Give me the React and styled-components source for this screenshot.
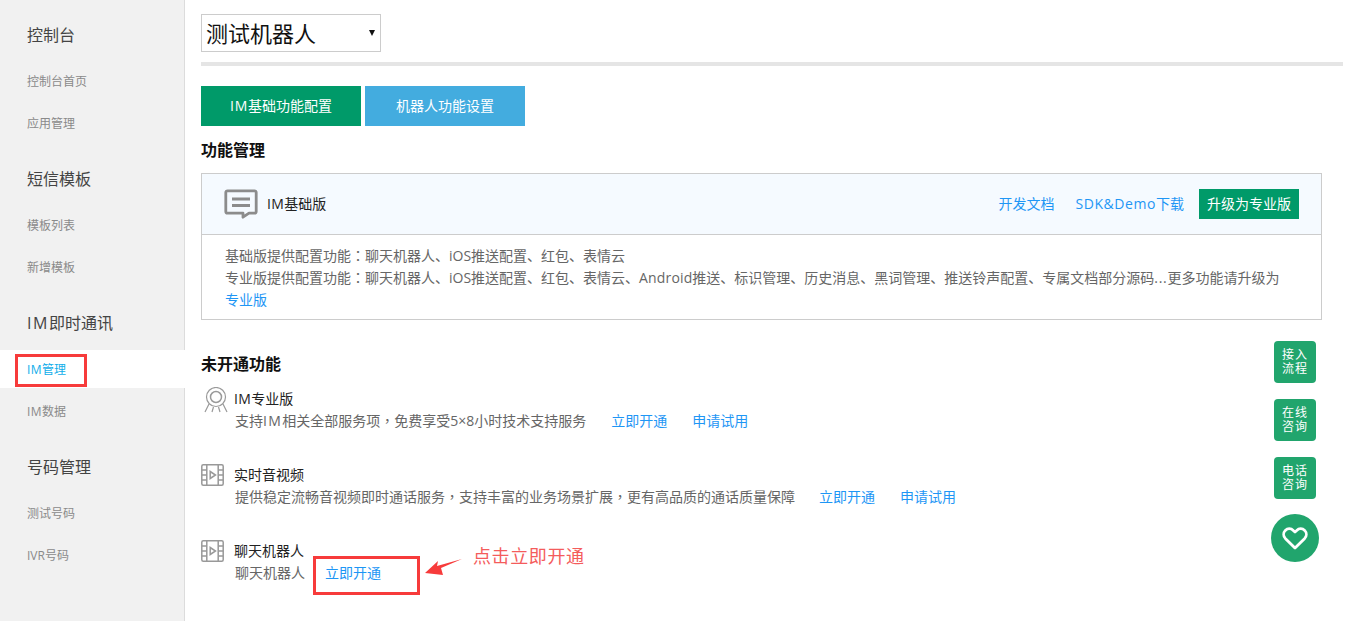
import React from "react";
import styled, { createGlobalStyle } from "styled-components";

const FONT = `"Open Sans", "Noto Sans CJK SC", "Liberation Sans", sans-serif`;

const Global = createGlobalStyle`
  html, body { margin: 0; padding: 0; background: #fff; }
  body { font-family: ${FONT}; color: #333; overflow: hidden; }
  * { box-sizing: border-box; }
`;

const Page = styled.div`
  display: flex;
  width: 1348px;
  height: 621px;
  position: relative;
  overflow: hidden;
`;

const Latin = styled.span`
  letter-spacing: ${(p) => p.$track || 0.1}em;
`;
const Punct = styled.span`
  font-family: "Noto Sans CJK TC", sans-serif;
  line-height: 0;
`;

const Sidebar = styled.nav`
  width: 185px;
  flex: none;
  padding-top: 12px;
  background: #f1f1f1;
  border-right: 1px solid #dcdcdc;
`;
const NavGroup = styled.div`
  padding-bottom: 10px;
`;
const NavHeading = styled.div`
  height: 46px;
  margin-bottom: 4px;
  padding-left: 27px;
  font-size: 16px;
  line-height: 46px;
  color: #444;
`;
const NavItem = styled.div`
  height: 38px;
  margin-bottom: 4px;
  margin-right: ${(p) => (p.$active ? "-1px" : "0")};
  padding: 1px 0 0 27px;
  font-size: 12px;
  line-height: 37px;
  color: ${(p) => (p.$active ? "#10aeea" : "#8a8a8a")};
  background: ${(p) => (p.$active ? "#fff" : "transparent")};
`;

const Main = styled.main`
  flex: 1;
  min-width: 0;
  padding: 14px 5px 0 16px;
`;
const SelectWrap = styled.div`
  position: relative;
  width: 180px;
  height: 38px;
  &::after {
    content: "";
    position: absolute;
    right: 6px;
    top: 16px;
    border-left: 3.5px solid transparent;
    border-right: 3.5px solid transparent;
    border-top: 6px solid #111;
  }
`;
const Select = styled.select`
  appearance: none;
  width: 100%;
  height: 100%;
  padding: 0 0 0 4px;
  border: 1px solid #ccc;
  border-radius: 0;
  background: #fff;
  font-family: ${FONT};
  font-size: 22px;
  color: #111;
`;
const Divider = styled.div`
  height: 4px;
  margin-top: 10px;
  background: #e5e5e5;
`;
const Tabs = styled.div`
  display: flex;
  gap: 4px;
  margin-top: 20px;
`;
const Tab = styled.div`
  width: 160px;
  height: 40px;
  font-size: 14px;
  line-height: 40px;
  text-align: center;
  color: #fff;
  background: ${(p) => (p.$active ? "#009a69" : "#43acdf")};
`;
const SectionTitle = styled.h2`
  height: 24px;
  margin: ${(p) => p.$top}px 0 0;
  font-size: 16px;
  font-weight: 700;
  line-height: 24px;
  color: #111;
`;
const Panel = styled.section`
  width: 1121px;
  margin-top: 11px;
  border: 1px solid #ccc;
`;
const PanelHeader = styled.header`
  display: flex;
  align-items: center;
  height: 61px;
  padding: 0 22px 0 22px;
  background: #f5faff;
  border-bottom: 1px solid #ccc;
`;
const PanelName = styled.span`
  margin: 0 0 2px 9px;
  font-size: 14px;
  color: #222;
`;
const PanelActions = styled.div`
  display: flex;
  align-items: center;
  margin-left: auto;
`;
const Link = styled.a`
  margin-left: ${(p) => p.$gap || 0}px;
  font-size: 14px;
  color: #1e96f5;
  white-space: nowrap;
`;
const HeaderLink = styled(Link)`
  margin-bottom: 2px;
`;
const UpgradeButton = styled.div`
  width: 100px;
  height: 30px;
  margin-left: 15px;
  font-size: 14px;
  line-height: 30px;
  text-align: center;
  color: #fff;
  background: #009a69;
`;
const PanelBody = styled.div`
  padding: 10px 23px 8px;
  font-size: 14px;
  line-height: 22px;
  color: #666;
`;
const FeatureList = styled.div`
  display: flex;
  flex-direction: column;
  gap: 32px;
  margin-top: 12px;
`;
const Feature = styled.div`
  display: flex;
  padding-left: ${(p) => p.$inset || 0}px;
`;
const FeatureIcon = styled.div`
  flex: none;
  width: ${(p) => p.$width}px;
  margin-top: ${(p) => p.$top || 0}px;
  line-height: 0;
`;
const FeatureTitle = styled.div`
  font-size: 14px;
  line-height: 22px;
  color: #222;
`;
const FeatureDesc = styled.div`
  display: flex;
  padding-left: 1px;
  font-size: 14px;
  line-height: 22px;
  color: #666;
`;

const RedBox = styled.div`
  position: absolute;
  left: ${(p) => p.$x}px;
  top: ${(p) => p.$y}px;
  width: ${(p) => p.$w}px;
  height: ${(p) => p.$h}px;
  border: 3px solid #f73b3b;
`;
const ArrowMark = styled.svg`
  position: absolute;
  left: 424px;
  top: 558px;
`;
const Callout = styled.div`
  position: absolute;
  left: 473px;
  top: 544px;
  font-size: 18px;
  line-height: 24px;
  letter-spacing: 0.6px;
  color: #f45c5c;
  white-space: nowrap;
`;
const FloatBar = styled.aside`
  position: absolute;
  right: 29px;
  top: 341px;
  display: flex;
  flex-direction: column;
  align-items: center;
  gap: 16px;
  width: 48px;
`;
const FloatButton = styled.div`
  width: 42px;
  height: 42px;
  padding-top: 7px;
  border-radius: 4px;
  background: #21a56d;
  color: #fff;
  font-family: "Liberation Sans", "Noto Sans CJK SC", sans-serif;
  font-size: 12px;
  line-height: 14px;
  letter-spacing: 1px;
  text-align: center;
`;
const FloatCircle = styled.div`
  display: flex;
  align-items: center;
  justify-content: center;
  width: 48px;
  height: 48px;
  margin-top: -1px;
  border-radius: 50%;
  background: #21a56d;
`;

const nav = [
  ["控制台", ["控制台首页", "应用管理"]],
  ["短信模板", ["模板列表", "新增模板"]],
  [<><Latin>IM</Latin>即时通讯</>, [<><Latin $track={0.04}>IM</Latin>管理</>, <><Latin $track={0.04}>IM</Latin>数据</>]],
  ["号码管理", ["测试号码", "IVR号码"]],
];

const ChatIcon = () => (
  <svg width="34" height="30" viewBox="0 0 34 30" fill="none" stroke="#8c8c8c" strokeWidth="2.800">
    <path d="M3.500 1.800h27a1.700 1.700 0 0 1 1.700 1.700v19a1.700 1.700 0 0 1-1.700 1.700H25l-6 4v-4H3.500a1.700 1.700 0 0 1-1.700-1.700v-19a1.700 1.700 0 0 1 1.700-1.700z" strokeLinejoin="round" />
    <path d="M8 10h18M8 16.500h18" />
  </svg>
);
const MedalIcon = () => (
  <svg width="24" height="26" viewBox="0 0 24 26" fill="none" stroke="#9a9a9a" strokeWidth="1.200">
    <circle cx="12" cy="10" r="9.500" />
    <circle cx="12" cy="10" r="5.500" strokeWidth="1.500" />
    <path d="M5 17 1 25M19 17l4 8M9.500 20l-1.500 5M14.500 20l1.500 5" />
  </svg>
);
const FilmIcon = () => (
  <svg width="23" height="22" viewBox="0 0 23 22" fill="none" stroke="#999" strokeWidth="1.500">
    <rect x="0.800" y="0.800" width="21.400" height="20.400" rx="1.500" />
    <path d="M5.800 1v20M17.200 1v20M1 6h5M1 11h5M1 16h5M17 6h5M17 11h5M17 16h5" />
    <path d="M9.200 7.500 14.500 11l-5.300 3.500z" />
  </svg>
);
const HeartIcon = () => (
  <svg width="26" height="23" viewBox="0 0 26 23" fill="none" stroke="#fff" strokeWidth="2.800" strokeLinejoin="round">
    <path d="M13 21 3.300 11.400a5.800 5.800 0 0 1 0-8 5.700 5.700 0 0 1 8 0L13 5l1.700-1.600a5.700 5.700 0 0 1 8 0 5.800 5.800 0 0 1 0 8z" />
  </svg>
);

export default function App() {
  return (
    <Page>
      <Global />
      <Sidebar>
        {nav.map(([heading, items], g) => (
          <NavGroup key={g}>
            <NavHeading>{heading}</NavHeading>
            {items.map((item, i) => (
              <NavItem key={i} $active={g === 2 && i === 0}>{item}</NavItem>
            ))}
          </NavGroup>
        ))}
      </Sidebar>
      <Main>
        <SelectWrap>
          <Select defaultValue="bot">
            <option value="bot">测试机器人</option>
          </Select>
        </SelectWrap>
        <Divider />
        <Tabs>
          <Tab $active><Latin $track={0.06}>IM</Latin>基础功能配置</Tab>
          <Tab>机器人功能设置</Tab>
        </Tabs>
        <SectionTitle $top={12}>功能管理</SectionTitle>
        <Panel>
          <PanelHeader>
            <ChatIcon />
            <PanelName><Latin $track={0.03}>IM</Latin>基础版</PanelName>
            <PanelActions>
              <HeaderLink>开发文档</HeaderLink>
              <HeaderLink $gap={21}><Latin $track={0.04}>SDK&amp;Demo</Latin>下载</HeaderLink>
              <UpgradeButton>升级为专业版</UpgradeButton>
            </PanelActions>
          </PanelHeader>
          <PanelBody>
            基础版提供配置功能<Punct>：</Punct>聊天机器人、iOS推送配置、红包、表情云
            <br />
            专业版提供配置功能<Punct>：</Punct>聊天机器人、iOS推送配置、红包、表情云、<Latin $track={0.01}>Android</Latin>推送、标识管理、历史消息、黑词管理、推送铃声配置、专属文档部分源码<Latin $track={0.05}>...</Latin>更多功能请升级为
            <br />
            <Link>专业版</Link>
          </PanelBody>
        </Panel>
        <SectionTitle $top={32}>未开通功能</SectionTitle>
        <FeatureList>
          <Feature $inset={3}>
            <FeatureIcon $width={30} $top={-1}><MedalIcon /></FeatureIcon>
            <div>
              <FeatureTitle><Latin $track={0.03}>IM</Latin>专业版</FeatureTitle>
              <FeatureDesc>
                <span>支持<Latin>IM</Latin>相关全部服务项<Punct>，</Punct>免费享受5×8小时技术支持服务</span>
                <Link $gap={25}>立即开通</Link>
                <Link $gap={25}>申请试用</Link>
              </FeatureDesc>
            </div>
          </Feature>
          <Feature>
            <FeatureIcon $width={33}><FilmIcon /></FeatureIcon>
            <div>
              <FeatureTitle>实时音视频</FeatureTitle>
              <FeatureDesc>
                <span>提供稳定流畅音视频即时通话服务<Punct>，</Punct>支持丰富的业务场景扩展<Punct>，</Punct>更有高品质的通话质量保障</span>
                <Link $gap={24}>立即开通</Link>
                <Link $gap={25}>申请试用</Link>
              </FeatureDesc>
            </div>
          </Feature>
          <Feature>
            <FeatureIcon $width={33}><FilmIcon /></FeatureIcon>
            <div>
              <FeatureTitle>聊天机器人</FeatureTitle>
              <FeatureDesc>
                聊天机器人
                <Link $gap={20}>立即开通</Link>
              </FeatureDesc>
            </div>
          </Feature>
        </FeatureList>
      </Main>

      <RedBox $x={15} $y={354} $w={72} $h={33} />
      <RedBox $x={313} $y={556} $w={107} $h={39} />
      <ArrowMark width="40" height="20" viewBox="0 0 40 20">
        <path d="M1 15 14 3l-1 5 25-7-21 9 2 7z" fill="#f73b3b" />
      </ArrowMark>
      <Callout>点击立即开通</Callout>

      <FloatBar>
        <FloatButton>接入<br />流程</FloatButton>
        <FloatButton>在线<br />咨询</FloatButton>
        <FloatButton>电话<br />咨询</FloatButton>
        <FloatCircle><HeartIcon /></FloatCircle>
      </FloatBar>
    </Page>
  );
}
